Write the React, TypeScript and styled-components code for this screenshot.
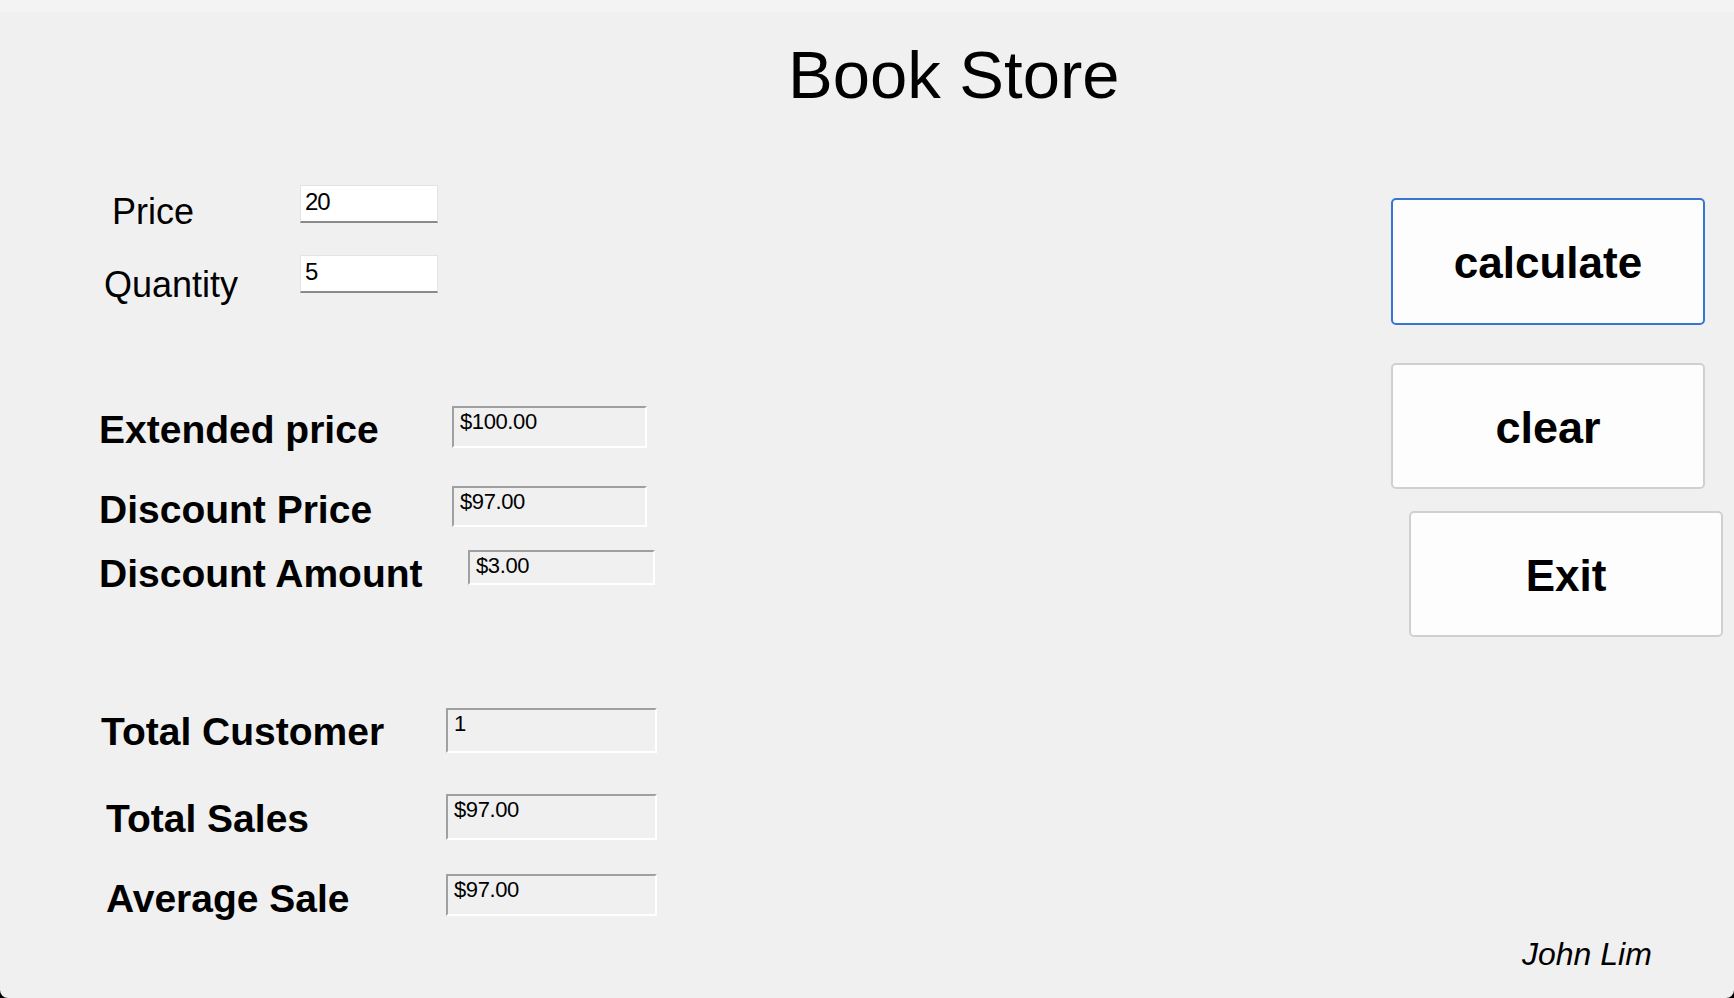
import styled, { createGlobalStyle } from "styled-components";

const GlobalStyle = createGlobalStyle`
  html, body {
    margin: 0;
    padding: 0;
    background: #000;
  }
  body {
    font-family: "Liberation Sans", Arial, sans-serif;
    color: #000;
  }
  * {
    box-sizing: border-box;
  }
`;

const Screen = styled.div`
  width: 1734px;
  height: 998px;
  display: flex;
  flex-direction: column;
  overflow: hidden;
`;

const TitleBarEdge = styled.div`
  height: 12px;
  background: #f3f3f3;
`;

const Window = styled.div`
  flex: 1;
  display: flex;
  flex-direction: column;
  background: #f0f0f0;
  border-radius: 0 0 8px 8px;
`;

const Title = styled.h1`
  margin: 29px 0 0 788px;
  font-size: 67px;
  line-height: 67px;
  font-weight: 400;
  white-space: nowrap;
`;

const Main = styled.div`
  flex: 1;
  display: flex;
  justify-content: space-between;
  margin-top: 77px;
  padding-right: 11px;
`;

const FormColumn = styled.div`
  display: flex;
  flex-direction: column;
`;

const Row = styled.div<{ $indent: number; $gap: number; $height: number }>`
  display: flex;
  align-items: flex-start;
  height: ${(p) => p.$height}px;
  margin-top: ${(p) => p.$gap}px;
  padding-left: ${(p) => p.$indent}px;
`;

const Label = styled.label<{ $bold?: boolean; $offset: number; $width: number }>`
  flex: none;
  width: ${(p) => p.$width}px;
  margin-top: ${(p) => p.$offset}px;
  font-size: ${(p) => (p.$bold ? 39 : 36)}px;
  line-height: ${(p) => (p.$bold ? 38 : 36)}px;
  font-weight: ${(p) => (p.$bold ? 700 : 400)};
  white-space: nowrap;
`;

// editable text boxes: white with a sunken bottom edge, text sits at the top
const EntryBox = styled.input<{ $width: number; $height: number }>`
  width: ${(p) => p.$width}px;
  height: ${(p) => p.$height}px;
  margin: 0;
  padding: 4px 4px ${(p) => p.$height - 31}px;
  background: #fff;
  border: 1px solid #e4e4e4;
  border-bottom: 2px solid #8a8a8a;
  border-radius: 0;
  outline: none;
  font-family: "Liberation Sans", Arial, sans-serif;
  font-size: 24px;
  line-height: 24px;
  letter-spacing: -1px;
  color: #000;
  vertical-align: top;
`;

// read-only results: 3D inset border, form-coloured background
const OutputBox = styled.input<{ $width: number; $height: number }>`
  width: ${(p) => p.$width}px;
  height: ${(p) => p.$height}px;
  margin: 0;
  padding: 3px 6px ${(p) => p.$height - 29}px;
  background: #f0f0f0;
  border-style: solid;
  border-width: 2px;
  border-color: #a0a0a0 #fff #fff #a0a0a0;
  border-radius: 0;
  outline: none;
  font-family: "Liberation Sans", Arial, sans-serif;
  font-size: 22px;
  line-height: 22px;
  letter-spacing: -0.4px;
  color: #000;
  vertical-align: top;
`;

const ButtonColumn = styled.div`
  display: flex;
  flex-direction: column;
  align-items: flex-start;
  width: 332px;
  padding-top: 13px;
`;

const ActionButton = styled.button<{
  $primary?: boolean;
  $gap: number;
  $shift: number;
  $height: number;
  $size: number;
}>`
  width: 314px;
  height: ${(p) => p.$height}px;
  margin: ${(p) => p.$gap}px 0 0 ${(p) => p.$shift}px;
  padding: 3px 0 0;
  display: flex;
  align-items: center;
  justify-content: center;
  background: #fdfdfd;
  border: 2px solid ${(p) => (p.$primary ? "#3577d0" : "#d0d0d0")};
  border-radius: 5px;
  font-family: "Liberation Sans", Arial, sans-serif;
  font-size: ${(p) => p.$size}px;
  font-weight: 700;
  color: #000;
  cursor: pointer;
`;

const Credit = styled.div`
  margin: auto 0 28px 131px;
  font-size: 32px;
  line-height: 32px;
  font-style: italic;
  white-space: nowrap;
`;

type Field = {
  label: string;
  value: string;
  editable?: boolean;
  indent: number;
  fieldX: number;
  width: number;
  height: number;
  gap: number;
  offset: number;
};

const fields: Field[] = [
  { label: "Price", value: "20", editable: true, indent: 112, fieldX: 300, width: 138, height: 38, gap: 0, offset: 9 },
  { label: "Quantity", value: "5", editable: true, indent: 104, fieldX: 300, width: 138, height: 38, gap: 32, offset: 12 },
  { label: "Extended price", value: "$100.00", indent: 99, fieldX: 452, width: 195, height: 42, gap: 113, offset: 5 },
  { label: "Discount Price", value: "$97.00", indent: 99, fieldX: 452, width: 195, height: 41, gap: 38, offset: 5 },
  { label: "Discount Amount", value: "$3.00", indent: 99, fieldX: 468, width: 187, height: 35, gap: 23, offset: 5 },
  { label: "Total Customer", value: "1", indent: 101, fieldX: 446, width: 211, height: 45, gap: 123, offset: 5 },
  { label: "Total Sales", value: "$97.00", indent: 106, fieldX: 446, width: 211, height: 46, gap: 41, offset: 6 },
  { label: "Average Sale", value: "$97.00", indent: 106, fieldX: 446, width: 211, height: 42, gap: 34, offset: 6 },
];

export default function App() {
  return (
    <>
      <GlobalStyle />
      <Screen>
        <TitleBarEdge />
        <Window>
          <Title>Book Store</Title>
          <Main>
            <FormColumn>
              {fields.map((f) => (
                <Row key={f.label} $indent={f.indent} $gap={f.gap} $height={f.height}>
                  <Label $bold={!f.editable} $offset={f.offset} $width={f.fieldX - f.indent}>
                    {f.label}
                  </Label>
                  {f.editable ? (
                    <EntryBox defaultValue={f.value} $width={f.width} $height={f.height} />
                  ) : (
                    <OutputBox readOnly value={f.value} $width={f.width} $height={f.height} />
                  )}
                </Row>
              ))}
            </FormColumn>
            <ButtonColumn>
              <ActionButton $primary $gap={0} $shift={0} $height={127} $size={44}>
                calculate
              </ActionButton>
              <ActionButton $gap={38} $shift={0} $height={126} $size={45}>
                clear
              </ActionButton>
              <ActionButton $gap={22} $shift={18} $height={126} $size={44}>
                Exit
              </ActionButton>
              <Credit>John Lim</Credit>
            </ButtonColumn>
          </Main>
        </Window>
      </Screen>
    </>
  );
}
